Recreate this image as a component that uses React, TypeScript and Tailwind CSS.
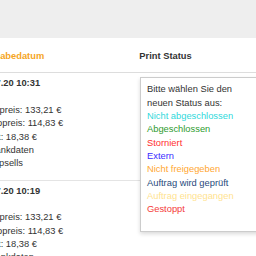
const statusOptions = [
  { label: "Nicht abgeschlossen", color: "text-[#2fd9dc]" },
  { label: "Abgeschlossen", color: "text-[#2e9b2e]" },
  { label: "Storniert", color: "text-[#ff3030]" },
  { label: "Extern", color: "text-[#3b2dff]" },
  { label: "Nicht freigegeben", color: "text-[#ffa733]" },
  { label: "Auftrag wird geprüft", color: "text-[#274a7c]" },
  { label: "Auftrag eingegangen", color: "text-[#ffe38f]" },
  { label: "Gestoppt", color: "text-[#f43a3a]" },
];

const orders = [
  { datum: "08.07.20 10:31", brutto: "133,21", netto: "114,83", mwst: "18,38" },
  { datum: "08.07.20 10:19", brutto: "133,21", netto: "114,83", mwst: "18,38" },
];

function StatusPopover() {
  return (
    <div className="absolute left-[6px] top-[4px] w-[140px] h-[155px] border border-[#cccccc] bg-white shadow-[0_2px_4px_rgba(0,0,0,0.15)] pl-[6px] pt-[5px]">
      <div className="flex">
        <span>
          Bitte wählen Sie den
          <br />
          neuen Status aus:
        </span>
        <span className="ml-[24px] text-[#d0d0d0]">×</span>
      </div>
      {statusOptions.map((s) => (
        <div key={s.label} className={s.color}>
          {s.label}
        </div>
      ))}
    </div>
  );
}

export default function App() {
  const cell = "px-[5.33px]";

  return (
    <div className="w-[256px] h-[256px] overflow-hidden bg-white font-['Liberation_Sans',Arial,sans-serif] text-[9.33px] leading-[13.33px] text-[#333333]">
      <div className="h-[38px] bg-[#eeeeee]" />

      <div className="ml-[-28px] w-[420px]">
        <div className="grid grid-cols-[162px_1fr] border-b border-[#dddddd] font-bold">
          <div className={`${cell} pt-[12px] pb-[9px] text-[#f5a524]`}>Freigabedatum</div>
          <div className={`${cell} pt-[12px] pb-[9px]`}>Print Status</div>
        </div>

        {orders.map((o, i) => (
          <div key={i} className="grid grid-cols-[162px_1fr] border-b border-[#e4e4e4]">
            <div className={`${cell} pt-[4px] pb-[9px]`}>
              <div className="font-bold">{o.datum}</div>
              <div className="h-[13.33px]" />
              <div>Nettopreis: {o.brutto} €</div>
              <div>Bruttopreis: {o.netto} €</div>
              <div>MwSt: {o.mwst} €</div>
              <div className="pl-[12px]">Bankdaten</div>
              <div className="pl-[15px]">Upsells</div>
            </div>
            <div className="relative">{i === 0 && <StatusPopover />}</div>
          </div>
        ))}
      </div>
    </div>
  );
}
